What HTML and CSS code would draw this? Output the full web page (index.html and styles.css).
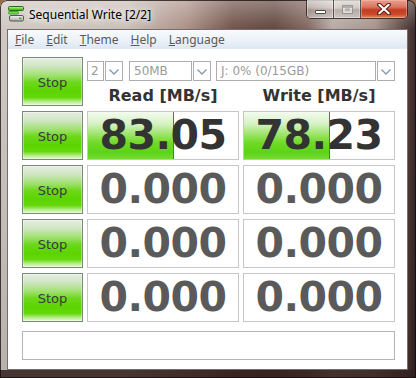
FILE: index.html
```html
<!DOCTYPE html>
<html>
<head>
<meta charset="utf-8">
<title>Sequential Write [2/2]</title>
<link rel="stylesheet" href="styles.css">
</head>
<body>
<div class="window">
  <div class="titlebar">
    <svg class="app-icon" width="16" height="16" viewBox="0 0 16 16">
      <defs>
        <linearGradient id="g1" x1="0" y1="0" x2="0" y2="1">
          <stop offset="0" stop-color="#b8ff80"/>
          <stop offset="1" stop-color="#22b000"/>
        </linearGradient>
        <linearGradient id="g2" x1="0" y1="0" x2="0" y2="1">
          <stop offset="0" stop-color="#f4f4f4"/>
          <stop offset="1" stop-color="#a8a8a8"/>
        </linearGradient>
      </defs>
      <rect x="0.5" y="0.5" width="15" height="4" rx="1" fill="url(#g1)" stroke="#2a6a1a" stroke-width="1"/>
      <rect x="0.5" y="5.5" width="10" height="2.5" rx="1" fill="#6ee040" stroke="#3a8a2a" stroke-width="0.8"/>
      <rect x="1.5" y="9.5" width="14" height="5.5" rx="1.5" fill="url(#g2)" stroke="#555" stroke-width="1"/>
      <rect x="11" y="11.5" width="2.5" height="1.5" fill="#30c000"/>
    </svg>
    <span class="title">Sequential Write [2/2]</span>
    <div class="caption">
      <span class="cbtn cmin"><i></i></span>
      <span class="cbtn cmax"><i></i></span>
      <span class="cbtn cclose">
        <svg width="14" height="12" viewBox="0 0 14 12">
          <path d="M2 1.5 L12 10.5 M12 1.5 L2 10.5" stroke="#5a1a10" stroke-width="4" stroke-linecap="round"/>
          <path d="M2.3 1.8 L11.7 10.2 M11.7 1.8 L2.3 10.2" stroke="#fff" stroke-width="2.2" stroke-linecap="round"/>
        </svg>
      </span>
    </div>
  </div>
  <div class="client">
    <div class="menubar">
      <span><u>F</u>ile</span>
      <span><u>E</u>dit</span>
      <span><u>T</u>heme</span>
      <span><u>H</u>elp</span>
      <span><u>L</u>anguage</span>
    </div>
    <div class="content">
      <div class="grid">
        <div class="stop">Stop</div>
        <div class="top">
          <div class="combos">
            <div class="combo c1"><span class="ctext">2</span><span class="arrow"><svg width="10" height="6" viewBox="0 0 10 6"><path d="M0.5 0.5 L5 5 L9.5 0.5" fill="none" stroke="#8796a4" stroke-width="1.3"/></svg></span></div>
            <div class="combo c2"><span class="ctext">50MB</span><span class="arrow"><svg width="10" height="6" viewBox="0 0 10 6"><path d="M0.5 0.5 L5 5 L9.5 0.5" fill="none" stroke="#8796a4" stroke-width="1.3"/></svg></span></div>
            <div class="combo c3"><span class="ctext">J: 0% (0/15GB)</span><span class="arrow"><svg width="10" height="6" viewBox="0 0 10 6"><path d="M0.5 0.5 L5 5 L9.5 0.5" fill="none" stroke="#8796a4" stroke-width="1.3"/></svg></span></div>
          </div>
          <div class="heads">
            <div>Read [MB/s]</div>
            <div>Write [MB/s]</div>
          </div>
        </div>

        <div class="stop">Stop</div>
        <div class="cell active" style="--w:86px">83.05</div>
        <div class="cell active" style="--w:86px">78.23</div>

        <div class="stop">Stop</div>
        <div class="cell">0.000</div>
        <div class="cell">0.000</div>

        <div class="stop">Stop</div>
        <div class="cell">0.000</div>
        <div class="cell">0.000</div>

        <div class="stop">Stop</div>
        <div class="cell">0.000</div>
        <div class="cell">0.000</div>
      </div>
      <div class="status"></div>
    </div>
  </div>
</div>
</body>
</html>
```
FILE: styles.css
```css
* { box-sizing: border-box; }
html, body { margin: 0; padding: 0; }
body {
  width: 416px;
  height: 378px;
  overflow: hidden;
  background: #9a6a4a;
  font-family: "DejaVu Sans", sans-serif;
}
.window {
  width: 416px;
  height: 378px;
  display: flex;
  flex-direction: column;
  padding: 0 8px 8px 7px;
  border-radius: 7px 7px 0 0;
  box-shadow: inset 0 0 0 1px rgba(20, 10, 10, 0.75);
  background:
    linear-gradient(0deg, rgba(50, 32, 30, 0.85) 0, rgba(50, 32, 30, 0.85) 8px, rgba(0,0,0,0) 8px),
    linear-gradient(180deg, rgba(255, 255, 255, 0.35) 0, rgba(255, 255, 255, 0.05) 29px, rgba(0,0,0,0.1) 100%),
    linear-gradient(90deg, #cdc6c0 0%, #c8bdb5 30%, #a68a80 45%, #6a4b42 56%, #5a3e36 66%, #7c6058 74%, #b5a6a0 80%, #a09088 90%, #4a3430 98%, #2e2020 100%);
}
.titlebar {
  height: 29px;
  display: flex;
  align-items: flex-start;
}
.app-icon {
  margin: 6px 0 0 1px;
  flex: none;
}
.title {
  margin: 6px 0 0 5px;
  font-family: "Noto Sans", sans-serif;
  font-size: 12px;
  line-height: 17px;
  color: #000;
  text-shadow: 0 0 6px rgba(255,255,255,0.9), 0 0 10px rgba(255,255,255,0.8), 0 0 14px rgba(255,255,255,0.6);
}
.caption {
  margin-left: auto;
  display: flex;
  height: 19px;
  border: 1px solid rgba(40, 30, 30, 0.8);
  border-top: none;
  border-radius: 0 0 5px 5px;
  overflow: hidden;
}
.cbtn {
  display: flex;
  align-items: center;
  justify-content: center;
  height: 100%;
}
.cmin, .cmax {
  width: 27px;
  border-right: 1px solid rgba(40, 30, 30, 0.7);
  background: linear-gradient(180deg, rgba(255,255,255,0.55) 0%, rgba(230,225,222,0.45) 45%, rgba(170,160,158,0.45) 55%, rgba(220,215,212,0.55) 100%);
  box-shadow: inset 0 0 0 1px rgba(255,255,255,0.35);
}
.cmin i {
  display: block;
  width: 11px;
  height: 4px;
  margin-top: 6px;
  background: #fff;
  border: 1px solid #4a4a4a;
  border-radius: 1px;
}
.cmax i {
  display: block;
  width: 11px;
  height: 9px;
  border: 1px solid rgba(140, 140, 140, 0.8);
  box-shadow: inset 0 2px 0 rgba(140,140,140,0.6), inset 0 0 0 2px rgba(255,255,255,0.5);
}
.cclose {
  width: 46px;
  background: linear-gradient(180deg, #eaa090 0%, #d87560 40%, #c23c20 55%, #cc4a2c 80%, #e88a60 100%);
  box-shadow: inset 0 0 0 1px rgba(255,200,180,0.4);
}
.client {
  flex: 1;
  display: flex;
  flex-direction: column;
  background: #fff;
  border: 1px solid rgba(40, 30, 30, 0.65);
}
.menubar {
  height: 19px;
  display: flex;
  align-items: center;
  gap: 12px;
  padding-left: 7px;
  background: linear-gradient(180deg, #f8fafd 0%, #eef3f9 50%, #dfe8f3 100%);
  border-bottom: 1px solid #e4ebf3;
  font-family: "Noto Sans", sans-serif;
  font-size: 12px;
  color: #5a5a5a;
}
.menubar u { text-decoration: underline; text-underline-offset: 1px; }
.content {
  padding: 8px 0 0 14px;
}
.grid {
  display: grid;
  grid-template-columns: 61px 152px 152px;
  grid-auto-rows: 49px;
  column-gap: 4px;
  row-gap: 5px;
  width: 373px;
}
.stop {
  display: flex;
  align-items: center;
  justify-content: center;
  padding-top: 2px;
  border: 1px solid #7b8a76;
  background: linear-gradient(180deg, #e6ece2 0%, #cfe6c2 18%, #9ee06c 38%, #6cd81a 52%, #5cd400 70%, #66d80c 84%, #bff09a 94%, #e0f8cc 100%);
  box-shadow: inset 0 0 0 1px rgba(255,255,255,0.35);
  font-family: "DejaVu Sans", sans-serif;
  font-size: 13px;
  color: #3a3a3a;
}
.top {
  grid-column: 2 / 4;
  display: flex;
  flex-direction: column;
}
.combos {
  display: flex;
  margin-top: 4px;
  height: 20px;
}
.combo {
  display: flex;
  height: 20px;
}
.c1 { width: 36px; margin-right: 6px; }
.c2 { width: 82px; margin-right: 5px; }
.c3 { flex: 1; }
.ctext {
  flex: 1;
  border: 1px solid #adadad;
  padding-left: 3px;
  font-size: 12px;
  line-height: 18px;
  color: #9a9a9a;
  white-space: nowrap;
  overflow: hidden;
}
.c2 .ctext, .c3 .ctext { padding-left: 4px; }
.arrow {
  width: 18px;
  margin-left: 1px;
  border: 1px solid #adadad;
  display: flex;
  align-items: center;
  justify-content: center;
  padding-top: 1px;
}
.heads {
  display: grid;
  grid-template-columns: 152px 152px;
  column-gap: 4px;
  margin-top: 5px;
  font-weight: bold;
  font-size: 16px;
  line-height: 20px;
  color: #333;
  text-align: center;
}
.cell {
  border: 1px solid #c6c6c6;
  background-color: #fff;
  font-weight: bold;
  font-size: 41px;
  line-height: 47px;
  text-align: center;
  color: #5a5a5a;
  letter-spacing: -0.5px;
}
.cell.active {
  color: #333;
  background-image:
    linear-gradient(90deg, rgba(0,0,0,0) calc(100% - 1px), #3a8e1c calc(100% - 1px)),
    linear-gradient(180deg, #f4fbf0 0%, #d6f2c4 25%, #9ce468 48%, #70da28 65%, #5ed414 85%, #74dc30 100%);
  background-size: var(--w) 100%, var(--w) 100%;
  background-repeat: no-repeat;
}
.status {
  margin-top: 9px;
  width: 373px;
  height: 29px;
  border: 1px solid #b4b4b4;
  background: #fff;
}
```
